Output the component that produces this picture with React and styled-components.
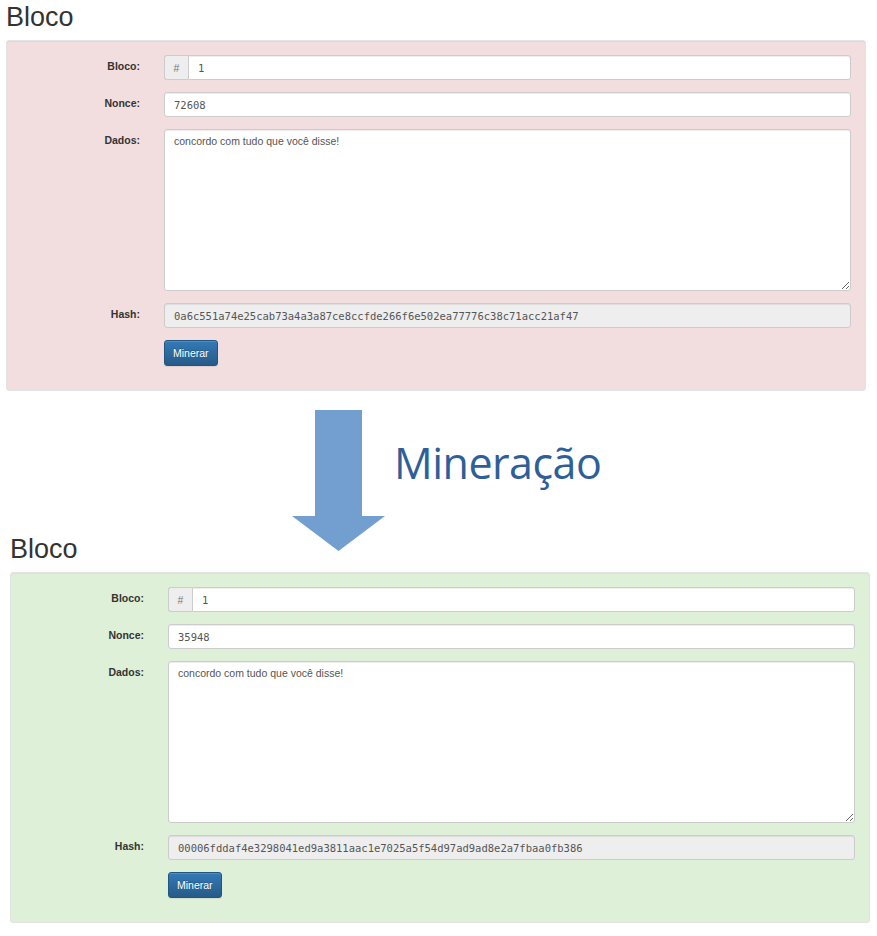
import React from "react";
import styled, { createGlobalStyle } from "styled-components";

const GlobalStyle = createGlobalStyle`
    html, body {
        margin: 0;
        padding: 0;
        background: #fff;
    }
    body {
        font-family: "Liberation Sans", Arial, sans-serif;
        color: #333;
    }
`

const Page = styled.div`
    width: 877px;
    height: 936px;
    overflow: hidden;
`

// um bloco: titulo + painel com o formulario
const Block = styled.section`
    margin-left: ${(p) => p.$shift}px;
`

const Title = styled.h2`
    margin: 2px 0 8px 0;
    font-size: 27px;
    font-weight: normal;
    line-height: 30px;
    color: #333;
`

const Panel = styled.div`
    box-sizing: border-box;
    width: 860px;
    height: 351px;
    background: ${(p) => p.$bg};
    border: 1px solid #e3e3e3;
    border-radius: 3px;
    box-shadow: inset 0 1px 1px rgba(0, 0, 0, 0.05);
    padding: 14px 14px 0 0;
    display: grid;
    grid-template-columns: 133px 1fr;
    column-gap: 24px;
    row-gap: 12px;
    align-content: start;
`

const Label = styled.label`
    text-align: right;
    font-weight: bold;
    font-size: 10.5px;
    line-height: 15px;
    padding-top: 4px;
    color: #333;
`

const Field = styled.div`
    display: flex;
`

const Addon = styled.span`
    box-sizing: border-box;
    width: 24px;
    height: 25px;
    display: flex;
    align-items: center;
    justify-content: center;
    background: #eee;
    border: 1px solid #ccc;
    border-right: none;
    border-radius: 3px 0 0 3px;
    font-size: 10.5px;
    color: #777;
`

const Input = styled.input`
    box-sizing: border-box;
    flex: 1;
    min-width: 0;
    height: 25px;
    padding: 4px 9px;
    border: 1px solid #ccc;
    border-radius: ${(p) => (p.$grouped ? "0 3px 3px 0" : "3px")};
    background: ${(p) => (p.readOnly ? "#eee" : "#fff")};
    box-shadow: inset 0 1px 1px rgba(0, 0, 0, 0.075);
    font-family: ${(p) => (p.$mono ? `"DejaVu Sans Mono", monospace` : `"Liberation Sans", Arial, sans-serif`)};
    font-size: 10.5px;
    line-height: 15px;
    color: #555;
    outline: none;
`

const TextArea = styled.textarea`
    box-sizing: border-box;
    width: 100%;
    height: 162px;
    display: block;
    padding: 4px 9px;
    border: 1px solid #ccc;
    border-radius: 3px;
    background: #fff;
    box-shadow: inset 0 1px 1px rgba(0, 0, 0, 0.075);
    font-family: "Liberation Sans", Arial, sans-serif;
    font-size: 10.5px;
    line-height: 15px;
    color: #555;
    resize: vertical;
    outline: none;
`

const Button = styled.button`
    box-sizing: border-box;
    height: 26px;
    padding: 4px 8px;
    border: 1px solid #245580;
    border-radius: 3px;
    background-image: linear-gradient(to bottom, #337ab7 0, #265a88 100%);
    box-shadow: inset 0 1px 0 rgba(255, 255, 255, 0.15), 0 1px 1px rgba(0, 0, 0, 0.075);
    color: #fff;
    font-family: "Liberation Sans", Arial, sans-serif;
    font-size: 10.5px;
    line-height: 15px;
    text-shadow: 0 -1px 0 rgba(0, 0, 0, 0.2);
    cursor: pointer;
`

const Actions = styled.div`
    grid-column: 2;
`

// seta + texto entre os blocos
const Middle = styled.div`
    height: 141px;
    padding: 19px 0 0 292px;
    box-sizing: border-box;
    display: flex;
    align-items: flex-start;
    gap: 8px;
`

const Arrow = styled.svg`
    flex: none;
    display: block;
`

const Caption = styled.div`
    margin-top: 31px;
    font-family: "Open Sans", "Noto Sans", sans-serif;
    font-size: 43px;
    line-height: 43px;
    letter-spacing: -0.5px;
    color: #2f5f98;
`

const blocos = [
    {
        bg: "#f2dede",
        shift: 6,
        nonce: "72608",
        hash: "0a6c551a74e25cab73a4a3a87ce8ccfde266f6e502ea77776c38c71acc21af47",
    },
    {
        bg: "#dff0d8",
        shift: 10,
        nonce: "35948",
        hash: "00006fddaf4e3298041ed9a3811aac1e7025a5f54d97ad9ad8e2a7fbaa0fb386",
    },
]

function Bloco({ dados }) {
    return (
        <Block $shift={dados.shift}>
            <Title>Bloco</Title>
            <Panel $bg={dados.bg}>
                <Label>Bloco:</Label>
                <Field>
                    <Addon>#</Addon>
                    <Input $grouped $mono defaultValue="1" />
                </Field>

                <Label>Nonce:</Label>
                <Field>
                    <Input $mono defaultValue={dados.nonce} />
                </Field>

                <Label>Dados:</Label>
                <TextArea defaultValue="concordo com tudo que você disse!" />

                <Label>Hash:</Label>
                <Field>
                    <Input $mono readOnly value={dados.hash} />
                </Field>

                <Actions>
                    <Button type="button">Minerar</Button>
                </Actions>
            </Panel>
        </Block>
    )
}

export default function App() {
    return (
        <Page>
            <GlobalStyle />
            <Bloco dados={blocos[0]} />
            <Middle>
                <Arrow width="94" height="141" viewBox="0 0 94 141">
                    <polygon points="23,0 70,0 70,106 93,106 46.5,141 0,106 23,106" fill="#729fcf" />
                </Arrow>
                <Caption>Mineração</Caption>
            </Middle>
            <Bloco dados={blocos[1]} />
        </Page>
    )
}
